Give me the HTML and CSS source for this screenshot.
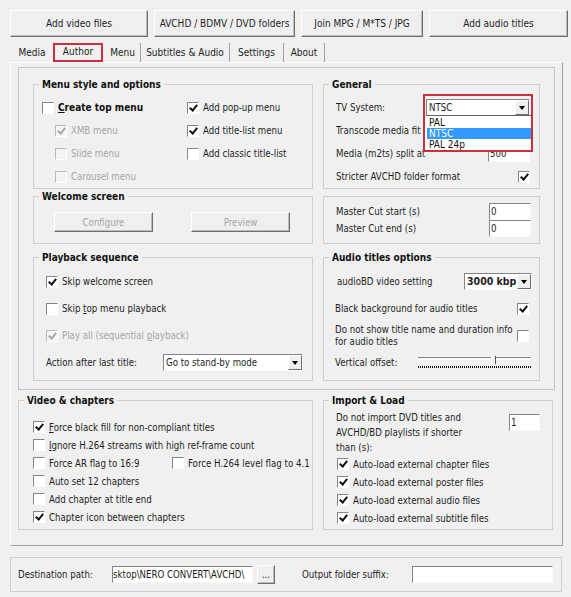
FILE: index.html
```html
<!DOCTYPE html>
<html lang="en">
<head>
    <meta charset="UTF-8">
    <meta name="viewport" content="width=device-width, initial-scale=1.0">
    <title>Author settings</title>
    <link rel="stylesheet" href="styles.css">
</head>
<body>
<div class="window">
    <div class="toolbar">
        <button class="btn">Add video files</button>
        <button class="btn">AVCHD / BDMV / DVD folders</button>
        <button class="btn">Join MPG / M*TS / JPG</button>
        <button class="btn">Add audio titles</button>
    </div>

    <div class="tabs">
        <div class="tab tab-media">Media</div>
        <div class="tab tab-author active">Author</div>
        <div class="tab tab-menu">Menu</div>
        <div class="tab tab-subs">Subtitles &amp; Audio</div>
        <div class="tab tab-settings">Settings</div>
        <div class="tab tab-about">About</div>
    </div>

    <div class="tab-panel">
        <div class="author-box">
            <div class="row row-menu">
                <div class="group">
                    <div class="group-title">Menu style and options</div>
                    <div class="menu-opts">
                        <label class="check strong"><span class="cb"></span><span><u>C</u>reate top menu</span></label>
                        <label class="check"><span class="cb on"></span>Add pop-up menu</label>
                        <label class="check indent disabled"><span class="cb on"></span>XMB menu</label>
                        <label class="check"><span class="cb on"></span>Add title-list menu</label>
                        <label class="check indent disabled"><span class="cb"></span>Slide menu</label>
                        <label class="check"><span class="cb"></span>Add classic title-list</label>
                        <label class="check indent disabled"><span class="cb"></span>Carousel menu</label>
                    </div>
                </div>

                <div class="group">
                    <div class="group-title">General</div>
                    <div class="general-rows">
                        <div class="field">
                            <span>TV System:</span>
                            <div class="select sel-tv">
                                <span class="sel-text">NTSC</span>
                                <span class="sel-arrow"></span>
                                <ul class="dropdown">
                                    <li>PAL</li>
                                    <li class="hl">NTSC</li>
                                    <li>PAL 24p</li>
                                </ul>
                            </div>
                        </div>
                        <div class="field">
                            <span>Transcode media fit</span>
                            <div class="select sel-small"><span class="sel-text"></span><span class="sel-arrow"></span></div>
                        </div>
                        <div class="field">
                            <span>Media (m2ts) split at</span>
                            <div class="input in-small">500</div>
                        </div>
                        <div class="field">
                            <span>Stricter AVCHD folder format</span>
                            <span class="cb on"></span>
                        </div>
                    </div>
                    <div class="mark mark-tv"></div>
                </div>
            </div>

            <div class="row row-welcome">
                <div class="group">
                    <div class="group-title">Welcome screen</div>
                    <div class="welcome-btns">
                        <button class="btn btn-dis">Configure</button>
                        <button class="btn btn-dis">Preview</button>
                    </div>
                </div>

                <div class="group">
                    <div class="cut-rows">
                        <div class="field">
                            <span>Master Cut start (s)</span>
                            <div class="input in-cut">0</div>
                        </div>
                        <div class="field">
                            <span>Master Cut end (s)</span>
                            <div class="input in-cut">0</div>
                        </div>
                    </div>
                </div>
            </div>

            <div class="row row-play">
                <div class="group">
                    <div class="group-title">Playback sequence</div>
                    <div class="play-rows">
                        <label class="check"><span class="cb on"></span>Skip welcome screen</label>
                        <label class="check"><span class="cb"></span><span>Skip <u>t</u>op menu playback</span></label>
                        <label class="check disabled"><span class="cb on"></span><span>Play all (sequential <u>p</u>layback)</span></label>
                        <div class="field">
                            <span>Action after last title:</span>
                            <div class="select sel-action"><span class="sel-text">Go to stand-by mode</span><span class="sel-arrow"></span></div>
                        </div>
                    </div>
                </div>

                <div class="group">
                    <div class="group-title">Audio titles options</div>
                    <div class="audio-rows">
                        <div class="field field-bd">
                            <span>audioBD video setting</span>
                            <div class="select sel-kbps"><span class="sel-text">3000 kbp</span><span class="sel-arrow"></span></div>
                        </div>
                        <div class="field">
                            <span>Black background for audio titles</span>
                            <span class="cb on"></span>
                        </div>
                        <div class="field">
                            <span class="two-line">Do not show title name and duration info<br>for audio titles</span>
                            <span class="cb"></span>
                        </div>
                        <div class="field">
                            <span>Vertical offset:</span>
                            <div class="slider">
                                <div class="groove"></div>
                                <div class="thumb"></div>
                                <div class="ticks"></div>
                            </div>
                        </div>
                    </div>
                </div>
            </div>
        </div>

        <div class="lower">
            <div class="group">
                <div class="group-title">Video &amp; chapters</div>
                <div class="video-rows">
                    <label class="check"><span class="cb on"></span><span><u>F</u>orce black fill for non-compliant titles</span></label>
                    <label class="check"><span class="cb"></span><span><u>I</u>gnore H.264 streams with high ref-frame count</span></label>
                    <div class="pair">
                        <label class="check first"><span class="cb"></span>Force AR flag to 16:9</label>
                        <label class="check"><span class="cb"></span>Force H.264 level flag to 4.1</label>
                    </div>
                    <label class="check"><span class="cb"></span>Auto set 12 chapters</label>
                    <label class="check"><span class="cb"></span>Add chapter at title end</label>
                    <label class="check"><span class="cb on"></span>Chapter icon between chapters</label>
                </div>
            </div>

            <div class="group">
                <div class="group-title">Import &amp; Load</div>
                <div class="import-top">
                    <span class="import-text">Do not import DVD titles and<br>AVCHD/BD playlists if shorter<br>than (s):</span>
                    <div class="input in-import">1</div>
                </div>
                <div class="import-rows">
                    <label class="check"><span class="cb on"></span>Auto-load external chapter files</label>
                    <label class="check"><span class="cb on"></span>Auto-load external poster files</label>
                    <label class="check"><span class="cb on"></span>Auto-load external audio files</label>
                    <label class="check"><span class="cb on"></span>Auto-load external subtitle files</label>
                </div>
            </div>
        </div>
    </div>

    <div class="dest">
        <span class="dest-label">Destination path:</span>
        <div class="input in-path">sktop\NERO CONVERT\AVCHD\</div>
        <button class="btn btn-browse">...</button>
        <span class="suffix-label">Output folder suffix:</span>
        <div class="input in-suffix"></div>
    </div>
</div>
</body>
</html>
```

FILE: styles.css
```css
body {
    margin: 0;
    background: #f0f0f0;
    font-family: "DejaVu Sans Condensed", "DejaVu Sans", sans-serif;
    font-stretch: condensed;
    font-size: 9.6px;
    color: #1e1e1e;
}

.window {
    width: 571px;
    height: 597px;
    box-sizing: border-box;
    padding-top: 10px;
    overflow: hidden;
}

/* raised classic button */
.btn {
    font: inherit;
    color: inherit;
    background: #efefef;
    border: 1px solid;
    border-color: #fff #6e6e6e #6e6e6e #fff;
    box-shadow: inset -1px -1px 0 #bdbdbd;
    padding: 0;
}

.toolbar {
    display: grid;
    grid-template-columns: 138px 141px 122px 139px;
    column-gap: 6px;
    padding-left: 10px;
    height: 27px;
    font-size: 10px;
}

/* tab strip */
.tabs {
    display: flex;
    height: 19px;
    margin-top: 6px;
    padding-left: 12px;
    font-size: 10px;
}

.tab {
    display: flex;
    align-items: center;
    justify-content: center;
    box-sizing: border-box;
    border-right: 1px solid #a0a0a0;
}

.tab-media { width: 40px; border-right: none; }
.tab-author { width: 50px; margin-left: 1px; }
.tab-menu { width: 36px; margin-left: 2px; }
.tab-subs { width: 89px; }
.tab-settings { width: 54px; }
.tab-about { width: 41px; }

.tab.active {
    border: 2px solid #c8323a;
    padding-bottom: 2px;
}

.tab-panel {
    margin-left: 10px;
    width: 553px;
    height: 484px;
    box-sizing: border-box;
    border: 1px solid;
    border-color: #fff #a0a0a0 #a0a0a0 #fff;
    padding: 4px 7px 0 7px;
}

.author-box {
    width: 537px;
    height: 323px;
    box-sizing: border-box;
    border: 1px solid #c4c4c4;
    padding: 16px 0 0 14px;
}

.row {
    display: grid;
    grid-template-columns: 280px 217px;
    column-gap: 10px;
}

.row-menu { height: 104px; }
.row-welcome { height: 48px; margin-top: 8px; }
.row-play { height: 124px; margin-top: 13px; }

/* group boxes */
.group {
    border: 1px solid #cfcfcf;
    box-sizing: border-box;
    position: relative;
}

.group-title {
    width: fit-content;
    margin: -7px 0 0 5px;
    padding: 0 3px;
    line-height: 13px;
    font-size: 10px;
    font-weight: bold;
    background: #f0f0f0;
    color: #111;
}

/* checkboxes */
.check {
    display: flex;
    align-items: center;
    gap: 4px;
    white-space: nowrap;
}

.cb {
    width: 12px;
    height: 12px;
    box-sizing: border-box;
    border: 1px solid;
    border-color: #858585 #fff #fff #858585;
    background: #fff;
    display: flex;
    align-items: center;
    justify-content: center;
    flex: none;
}

.cb.on::after {
    content: "";
    width: 3px;
    height: 6px;
    margin-top: -2px;
    border: solid #111;
    border-width: 0 2px 2px 0;
    transform: rotate(40deg);
}

.disabled {
    color: #a6a6a6;
}

.disabled .cb {
    background: #f4f4f4;
    border-color: #b9b9b9 #fff #fff #b9b9b9;
}

.disabled .cb.on::after {
    border-color: #a8a8a8;
}

.strong {
    font-weight: bold;
    font-size: 10px;
    color: #111;
}

.indent {
    padding-left: 13px;
}

/* fields: label left, control right */
.field {
    display: flex;
    align-items: center;
    justify-content: space-between;
    white-space: nowrap;
}

.input {
    box-sizing: border-box;
    height: 17px;
    border: 1px solid;
    border-color: #858585 #fafafa #fafafa #858585;
    background: #fff;
    padding-left: 1px;
    line-height: 15px;
    overflow: hidden;
    white-space: nowrap;
}

.select {
    box-sizing: border-box;
    height: 17px;
    display: flex;
    border: 1px solid;
    border-color: #858585 #fafafa #fafafa #858585;
    background: #fff;
    position: relative;
}

.sel-text {
    flex: 1;
    padding-left: 2px;
    line-height: 15px;
    overflow: hidden;
    white-space: nowrap;
}

.sel-arrow {
    width: 14px;
    box-sizing: border-box;
    border: 1px solid;
    border-color: #fff #6e6e6e #6e6e6e #fff;
    background: #efefef;
    display: flex;
    align-items: center;
    justify-content: center;
}

.sel-arrow::after {
    content: "";
    border-left: 3px solid transparent;
    border-right: 3px solid transparent;
    border-top: 4px solid #000;
}

/* menu style group */
.menu-opts {
    display: grid;
    grid-template-columns: 145px 1fr;
    grid-auto-rows: 23px;
    padding: 5px 0 0 8px;
}

/* general group */
.general-rows {
    display: grid;
    grid-auto-rows: 23px;
    padding: 5px 9px 0 12px;
}

.sel-tv { width: 104px; }
.sel-small { width: 60px; }
.in-small { width: 42px; }

.dropdown {
    position: absolute;
    top: 100%;
    left: -2px;
    width: 104px;
    margin: 0;
    padding: 1px 0 0 0;
    list-style: none;
    background: #fff;
    border: 1px solid #646464;
    border-left-width: 2px;
    border-left-color: #fff;
    z-index: 2;
    font-size: 10px;
}

.dropdown li {
    height: 11px;
    line-height: 11px;
    padding-left: 2px;
    color: #111;
}

.dropdown li.hl {
    background: #3399ff;
    color: #fff;
}

/* hand-drawn highlight frame */
.mark {
    position: absolute;
    box-sizing: border-box;
    border: 2px solid #c8323a;
    z-index: 3;
}

.mark-tv {
    left: 99px;
    top: 9px;
    width: 110px;
    height: 58px;
}

/* welcome screen */
.welcome-btns {
    display: flex;
    gap: 38px;
    padding: 9px 0 0 20px;
}

.btn-dis {
    width: 99px;
    height: 20px;
    color: #a6a6a6;
}

/* master cut */
.cut-rows {
    display: grid;
    grid-auto-rows: 17px;
    padding: 6px 8px 0 12px;
}

.in-cut { width: 42px; }

/* playback */
.play-rows {
    display: grid;
    grid-auto-rows: 27px;
    padding: 4px 9px 0 12px;
}

.sel-action { width: 140px; }

/* audio titles */
.audio-rows {
    display: grid;
    grid-auto-rows: 27px;
    padding: 4px 10px 0 11px;
}

.field-bd {
    padding-left: 2px;
    margin-right: -3px;
}

.sel-kbps {
    width: 68px;
    font-weight: bold;
    font-size: 10.5px;
}

.two-line {
    line-height: 12px;
}

.slider {
    position: relative;
    width: 113px;
    height: 14px;
    margin-right: -2px;
}

.groove {
    height: 1px;
    margin-top: 1px;
    border-top: 1px solid #8a8a8a;
    border-bottom: 1px solid #fff;
}

.thumb {
    position: absolute;
    left: 73px;
    top: 0;
    width: 3px;
    height: 8px;
    border-left: 1px solid #fff;
    border-right: 1px solid #555;
    background: #f0f0f0;
}

.ticks {
    height: 2px;
    margin-top: 6px;
    background: repeating-linear-gradient(90deg, #111 0 1px, transparent 1px 2px);
}

/* lower groups */
.lower {
    display: grid;
    grid-template-columns: 295px 230px;
    column-gap: 10px;
    height: 130px;
    margin-top: 10px;
}

.video-rows {
    display: grid;
    grid-auto-rows: 18px;
    padding: 11px 0 0 14px;
}

.pair {
    display: flex;
    align-items: center;
}

.pair .first {
    width: 139px;
}

.import-top {
    display: flex;
    justify-content: space-between;
    align-items: flex-start;
    padding: 3px 12px 0 12px;
}

.import-text {
    line-height: 15px;
}

.in-import {
    width: 31px;
    margin-top: 4px;
}

.import-rows {
    display: grid;
    grid-auto-rows: 18px;
    padding: 0 0 0 13px;
}

/* destination bar */
.dest {
    display: flex;
    align-items: center;
    margin: 11px 0 0 10px;
    width: 552px;
    height: 35px;
    box-sizing: border-box;
    border: 1px solid #cfcfcf;
    padding-left: 7px;
}

.dest-label { width: 94px; }

.in-path {
    width: 141px;
    padding-left: 0;
}

.btn-browse {
    width: 18px;
    height: 19px;
    margin-left: 4px;
    line-height: 12px;
}

.suffix-label {
    margin-left: 27px;
    width: 110px;
}

.in-suffix { width: 141px; }
```
